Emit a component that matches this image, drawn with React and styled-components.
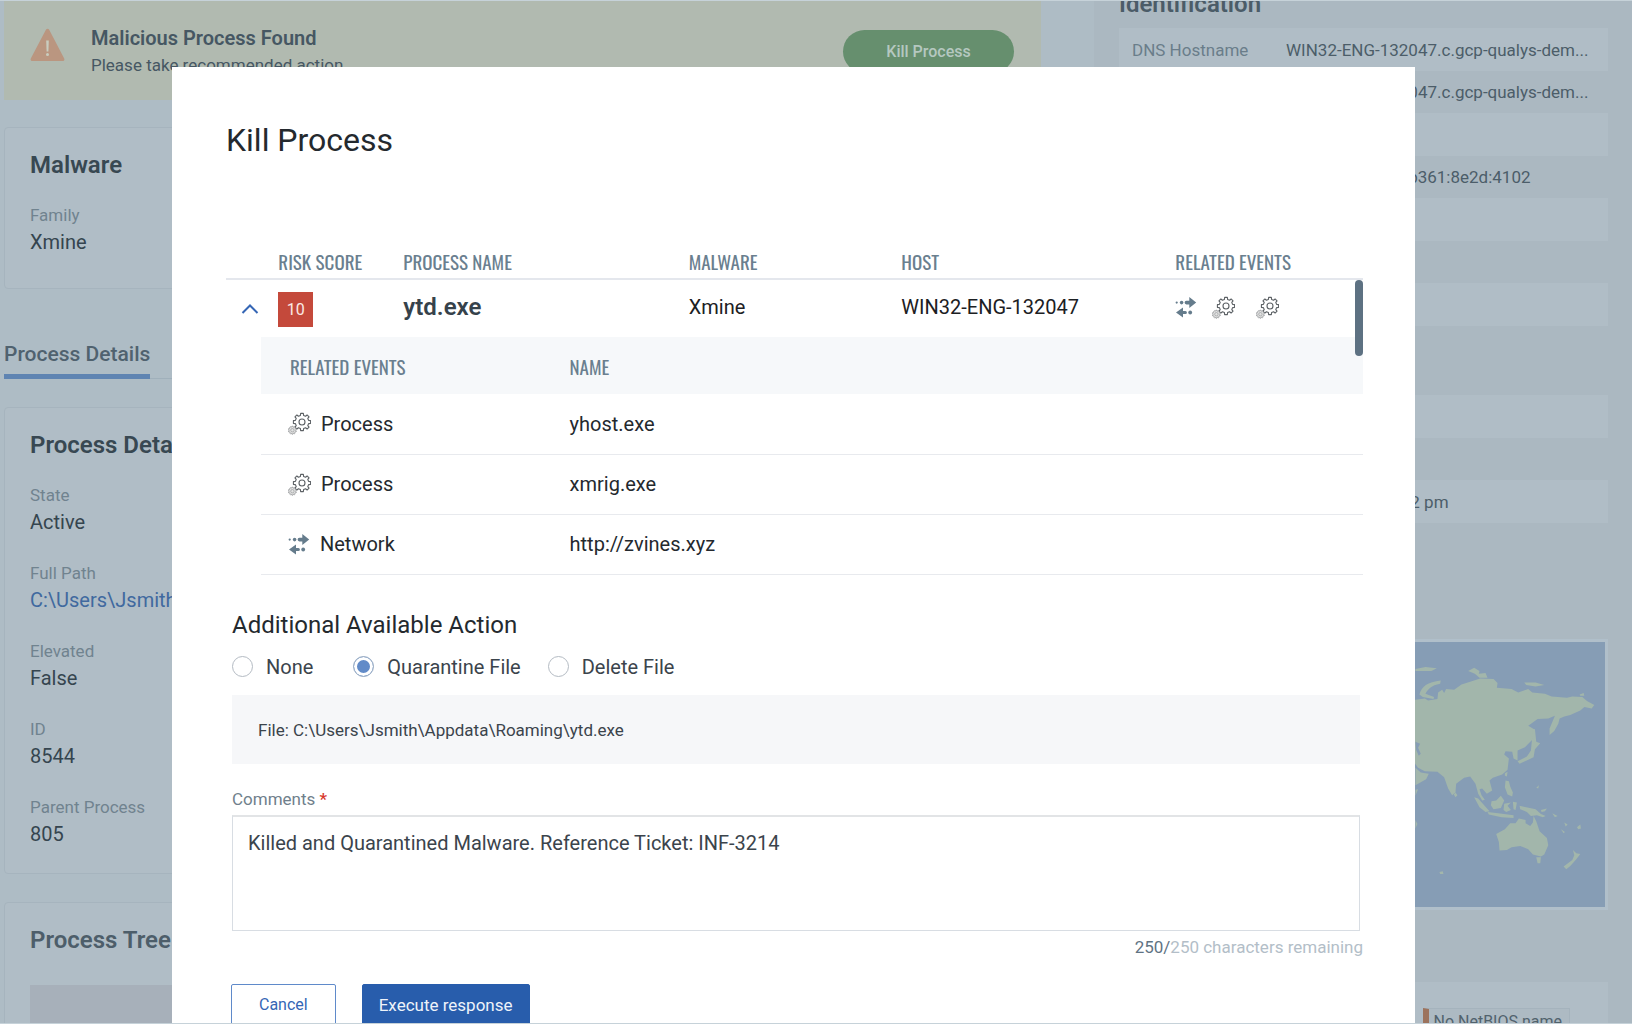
import React, { useState } from "react";
import styled, { createGlobalStyle, css } from "styled-components";

const GlobalStyle = createGlobalStyle`
  *, *::before, *::after { box-sizing: border-box; }
  body {
    margin: 0;
    font-family: Roboto, "Open Sans", sans-serif;
    color: #24292e;
    background: #c6d2d9;
  }
  h1, h2, h3, p, dl, dd, dt, fieldset, legend { margin: 0; padding: 0; }
  fieldset { border: 0; min-width: 0; }
  button, textarea { font-family: inherit; }
`;

const condensed = css`
  font-family: Oswald, "Roboto Condensed", "Liberation Sans Narrow", Roboto, sans-serif;
  font-weight: 400;
  font-size: 19px;
  line-height: 28px;
  text-transform: uppercase;
  color: #6a7f8f;
`;

/* ---------- page behind the dialog ---------- */

const Stage = styled.div`
  height: 100vh;
  overflow: hidden;
  border-top: 1px solid #c6d2d9;
  border-bottom: 1px solid #c6d2d9;
  display: grid;
  grid-template-columns: minmax(0, 1fr) 538px;
  background: #aebcc5;
`;

const Main = styled.main`
  padding: 0 53px 0 4px;
  min-width: 0;
`;

const Banner = styled.section`
  display: flex;
  align-items: flex-start;
  gap: 26px;
  height: 99px;
  padding: 24px 27px 0 26px;
  background: #b1bab0;
`;

const WarningIcon = styled.svg`
  width: 35px;
  height: 34px;
  margin-top: 3px;
  flex: none;
`;

const BannerText = styled.div`
  flex: 1;
  color: #465763;
`;

const BannerTitle = styled.h2`
  font-size: 20px;
  line-height: 26px;
  font-weight: 600;
`;

const BannerNote = styled.p`
  font-size: 17px;
  line-height: 28px;
`;

const PillButton = styled.button`
  width: 171px;
  height: 43px;
  margin-top: 5px;
  border: 0;
  border-radius: 22px;
  background: #668f6e;
  color: #b5c8c0;
  font-size: 16px;
  font-weight: 500;
`;

const Card = styled.section`
  margin-top: ${(p) => p.$top || 28}px;
  padding: 21px 25px ${(p) => p.$bottom || 25}px;
  border: 1px solid #a6b4be;
  border-radius: 4px;
  background: #b0bdc6;
`;

const CardTitle = styled.h2`
  font-size: 24px;
  line-height: 32px;
  font-weight: 600;
  color: ${(p) => (p.$muted ? "#4d5e6a" : "#384852")};
`;

const Fields = styled.dl`
  display: flex;
  flex-direction: column;
  gap: 24px;
  margin-top: 21px;
`;

const FieldLabel = styled.dt`
  font-size: 17px;
  line-height: 26px;
  color: #70838f;
`;

const FieldValue = styled.dd`
  font-size: 20px;
  line-height: 28px;
  color: #35454f;
  a { color: #40699f; text-decoration: none; }
`;

const Tabs = styled.nav`
  display: flex;
  margin: 50px 0 27px;
  box-shadow: inset 0 -1px 0 #a0b0bb;
`;

const Tab = styled.a`
  padding-bottom: 5px;
  border-bottom: 5px solid #5f84b2;
  font-size: 21px;
  line-height: 30px;
  font-weight: 500;
  color: #50626f;
  text-decoration: none;
`;

const TreeCanvas = styled.div`
  height: 200px;
  margin-top: 29px;
  background: #a7b0ba;
`;

const Aside = styled.aside`
  padding: 0 24px 0 25px;
  background: #abb8c1;
  min-width: 0;
`;

const AsideSection = styled.section`
  margin-top: ${(p) => (p.$first ? -11 : 31)}px;
`;

const AsideTitle = styled.h2`
  margin-bottom: 10px;
  font-size: 24px;
  line-height: 28px;
  font-weight: 600;
  color: #4b5c68;
`;

const PropertyRow = styled.div`
  display: grid;
  grid-template-columns: 154px minmax(0, 1fr);
  align-items: center;
  height: 42px;
  padding: 0 18px 0 13px;
  font-size: 17px;
  &:nth-child(odd) {
    height: 43px;
    background: #b0bdc6;
  }
`;

const PropertyLabel = styled.dt`
  color: #6a7d8a;
`;

const PropertyValue = styled.dd`
  white-space: nowrap;
  overflow: hidden;
  text-overflow: ellipsis;
  color: #4c5d69;
`;

const MapFrame = styled.div`
  margin-top: 57px;
  border: 3px solid #b0bfca;
  height: 271px;
  svg { display: block; width: 100%; height: 100%; background: #869db5; }
`;

const TagRow = styled.div`
  display: flex;
  justify-content: flex-end;
  margin-top: 13px;
  padding: 26px 38px;
  background: #b0bdc6;
`;

const Tag = styled.span`
  padding: 2px 7px 2px 5px;
  border: 1px solid #a5b3bd;
  border-left: 6px solid #9c735d;
  background: #adbac3;
  font-size: 16px;
  line-height: 22px;
  color: #51626d;
`;

/* ---------- dialog ---------- */

const Scrim = styled.div`
  position: fixed;
  inset: 67px 0 1px;
  padding: 0 217px 0 172px;
  display: flex;
  overflow: hidden;
`;

const Dialog = styled.div`
  flex: 1;
  min-width: 0;
  height: max-content;
  min-height: 100%;
  padding: 52px 52px 40px 54px;
  background: #fff;
`;

const DialogTitle = styled.h1`
  margin-bottom: 86px;
  font-size: 32px;
  line-height: 42px;
  font-weight: 400;
`;

const Scroller = styled.div`
  position: relative;
`;

const ScrollThumb = styled.span`
  position: absolute;
  top: 33px;
  right: 0;
  width: 8px;
  height: 76px;
  border-radius: 4px;
  background: #5d7182;
`;

const Table = styled.table`
  width: 100%;
  table-layout: fixed;
  border-collapse: collapse;
  th, td { padding: 0; text-align: left; }
`;

const HeadCell = styled.th`
  ${condensed}
  height: 32px;
  vertical-align: top;
  border-bottom: 2px solid #e4e7ed;
`;

const Cell = styled.td`
  height: 58px;
  vertical-align: middle;
  font-size: 20px;
  line-height: 24px;
  color: #1c2023;
  && { padding-bottom: 3px; }
`;

const ProcessName = styled.strong`
  font-size: 24px;
  font-weight: 600;
  color: #36424b;
`;

const ToggleButton = styled.button`
  display: flex;
  margin: 3px 0 0 13px;
  padding: 2px;
  border: 0;
  background: none;
`;

const Score = styled.span`
  display: flex;
  align-items: center;
  justify-content: center;
  width: 35px;
  height: 35px;
  margin-top: 5px;
  background: #c4493b;
  color: #fbe9e6;
  font-size: 16px;
`;

const IconRow = styled.div`
  display: flex;
  align-items: center;
  gap: 15px;
  svg:last-child { margin-left: 6px; }
`;

const Nested = styled.div`
  margin-left: 35px;
`;

const NestedHead = styled.th`
  ${condensed}
  height: 57px;
  background: #f6f8fa;
  &:first-child { padding-left: 29px; }
`;

const NestedCell = styled.td`
  height: 60px;
  border-bottom: 1px solid #e8eaee;
  font-size: 20px;
  line-height: 24px;
  color: #24292e;
  &:first-child { padding-left: 27px; }
`;

const EventKind = styled.span`
  display: flex;
  align-items: center;
  gap: 10px;
`;

const Form = styled.form`
  padding: 35px 3px 0 6px;
`;

const Legend = styled.legend`
  font-size: 24px;
  line-height: 30px;
`;

const RadioRow = styled.div`
  display: flex;
  gap: ${(p) => p.$gap}px;
  padding: 16px 0 17px;
`;

const RadioLabel = styled.label`
  display: flex;
  align-items: center;
  gap: 13px;
  margin-right: ${(p) => p.$after || 0}px;
  font-size: 20px;
  line-height: 22px;
  color: #3b444c;
`;

const Radio = styled.input`
  appearance: none;
  width: 21px;
  height: 21px;
  margin: 0;
  border: 1px solid #b4bbc3;
  border-radius: 50%;
  background: #fff;
  &:checked {
    background: #628bc8;
    box-shadow: inset 0 0 0 3px #fff;
    border-color: #9fb0c4;
  }
`;

const FileBox = styled.p`
  padding: 21px 26px 20px;
  background: #f6f7f9;
  font-size: 17px;
  line-height: 28px;
  color: #3b444c;
`;

const CommentLabel = styled.label`
  display: block;
  margin: 23px 0 4px;
  font-size: 17px;
  line-height: 24px;
  color: #707f8c;
  span { color: #d8372b; font-weight: 500; }
`;

const Comment = styled.textarea`
  display: block;
  width: 100%;
  height: 116px;
  padding: 13px 15px;
  border: 1px solid #d8dde3;
  border-top: 2px solid #e2e4e6;
  resize: none;
  outline: 0;
  font-size: 20px;
  line-height: 26px;
  color: #3b444c;
`;

const Counter = styled.p`
  margin: 4px -3px 0 0;
  text-align: right;
  font-size: 17px;
  line-height: 24px;
  color: #b3bec8;
  span { color: #5f7383; }
`;

const Actions = styled.div`
  display: flex;
  gap: 26px;
  margin: 25px 0 0 -1px;
`;

const ActionButton = styled.button`
  height: 42px;
  padding: 1px ${(p) => (p.$primary ? 16 : 27)}px 0;
  border: 1px solid ${(p) => (p.$primary ? "#285dac" : "#5f8aca")};
  border-radius: 2px;
  background: ${(p) => (p.$primary ? "#285dac" : "#fff")};
  color: ${(p) => (p.$primary ? "#eef3fa" : "#3566b5")};
  font-size: ${(p) => (p.$primary ? 17 : 16)}px;
  line-height: 24px;
`;

/* ---------- drawings ---------- */

function gearPath(cx, cy, outer, inner, teeth) {
  const step = (Math.PI * 2) / teeth;
  const parts = [];
  for (let i = 0; i < teeth; i += 1) {
    const a = i * step - Math.PI / 2;
    [
      [inner, -0.3],
      [outer, -0.2],
      [outer, 0.2],
      [inner, 0.3],
    ].forEach(([r, k]) => {
      const x = cx + r * Math.cos(a + k * step);
      const y = cy + r * Math.sin(a + k * step);
      parts.push(`${parts.length ? "L" : "M"}${x.toFixed(2)} ${y.toFixed(2)}`);
    });
  }
  return `${parts.join("")}Z`;
}

const bigGear = gearPath(14, 10, 8.7, 6.8, 8);
const smallGear = gearPath(4.4, 18.2, 4, 3.4, 10);

const GearsIcon = () => (
  <svg width="23" height="23" viewBox="0 0 23 23" fill="none" strokeLinejoin="round" aria-hidden="true">
    <path d={bigGear} stroke="#5c6165" strokeWidth="1.1" />
    <circle cx="14" cy="10" r="3" stroke="#5c6165" strokeWidth="1.1" />
    <path d={smallGear} fill="#e2e2e2" stroke="#9b9d9f" strokeWidth="0.9" />
    <circle cx="4.4" cy="18.2" r="1.7" stroke="#9b9d9f" strokeWidth="0.7" />
  </svg>
);

const NetworkIcon = () => (
  <svg width="22" height="22" viewBox="0 0 22 22" fill="#657c8c" aria-hidden="true">
    <circle cx="1.7" cy="6.6" r="1.1" />
    <circle cx="6.6" cy="6.6" r="1.8" />
    <path d="M11.400 4.800h2.900V1l6.900 5.500-6.900 5.500V8.400h-2.900a1.800 1.800 0 0 1 0-3.600z" />
    <path d="M10.400 15H8v-3.400L1 16.600l7 5V18h2.400a1.500 1.500 0 0 0 0-3z" />
    <circle cx="15.200" cy="16.500" r="1.900" />
  </svg>
);

const ChevronUp = () => (
  <svg width="18" height="12" viewBox="0 0 18 12" fill="none" aria-hidden="true">
    <path d="M1.500 10 9 2.500 16.500 10" stroke="#3566b5" strokeWidth="2" />
  </svg>
);

const WorldMap = () => (
  <svg viewBox="-869 17 1449 794" preserveAspectRatio="xMaxYMid slice" fill="#a2b6ab" role="img" aria-label="Asset location">
    <path d="M-20 190 12 190 40 186 50 192 78 188 80 168 92 160 98 170 104 158 128 160 150 144 176 136 206 126 246 128 258 140 256 154 300 158 320 168 350 158 362 168 400 172 420 180 466 184 482 180 512 182 526 194 548 206 540 216 518 212 506 222 476 236 458 240 444 246 440 262 428 284 414 296 414 276 430 238 410 246 378 248 350 268 370 280 368 304 340 332 318 342 318 372 306 366 302 346 282 344 278 354 292 366 288 400 272 414 244 424 234 432 242 462 226 472 212 456 204 458 210 476 220 490 212 492 200 472 192 442 176 420 158 424 134 442 132 468 122 476 110 456 98 422 78 406 40 404 20 394 -20 340Z" />
    <path d="M12 394 28 408 52 412 44 428 12 446ZM12 460 20 458 12 478ZM12 550 18 562 12 576Z" />
    <path d="M24 174C30 150 48 136 88 132L86 142C60 146 48 160 42 172L68 182 66 188 34 182ZM12 98 42 92 76 96 60 104 12 104ZM170 104 188 94 204 104 202 112 222 110 228 124 204 124 190 112ZM338 138 372 138 398 146 372 150 344 146ZM504 174 516 170 518 178 506 178Z" />
    <path d="M364 282 370 278 374 316 386 320 370 338 366 362 350 370 324 382 318 374 346 360 358 342ZM280 410 288 406 286 420 280 418ZM282 432 292 434 296 450 304 468 302 480 288 474 280 452ZM132 468 138 476 132 482 127 474Z" />
    <path d="M188 482 200 486 216 504 234 524 222 526 204 512ZM228 526 260 530 306 536 306 544 270 542 232 534ZM240 494 254 492 268 478 278 492 268 514 246 518 238 506ZM278 502 298 498 288 508 298 520 284 526 276 520ZM304 496 316 498 312 520 306 518ZM324 508 344 512 372 518 388 532 402 538 394 542 376 536 358 538 346 526 326 518ZM388 520 406 516 400 524 390 526ZM422 530 438 538 430 542Z" />
    <path d="M254 592 280 578 296 560 312 560 322 546 342 550 342 560 356 568 364 558 366 538 374 554 384 584 406 604 410 626 398 654 388 660 364 654 350 638 326 628 300 632 286 640 264 642 262 616ZM374 662 388 662 386 680 378 680Z" />
    <path d="M484 640 494 650 506 652 494 668 476 688 464 698 456 690 482 670 488 656ZM496 572 506 564 508 576 500 578ZM458 558 468 564 462 570ZM448 578 460 586 456 590ZM84 706 94 704 96 712 86 712ZM374 454 382 446 380 456Z" />
    <path d="M12 316 26 322 20 334 28 352 22 358 14 340Z" fill="#869db5" />
  </svg>
);

/* ---------- data ---------- */

const details = [
  ["State", "Active"],
  ["Full Path", "C:\\Users\\Jsmith\\Appdata\\Roaming\\ytd.exe", true],
  ["Elevated", "False"],
  ["ID", "8544"],
  ["Parent Process", "805"],
];

const identification = [
  ["DNS Hostname", "WIN32-ENG-132047.c.gcp-qualys-dem..."],
  ["FQDN", "WIN32-ENG-132047.c.gcp-qualys-dem..."],
  ["NetBIOS Name", ""],
  ["IPv6 Address", "fe80::8c5f:d38a:b361:8e2d:4102"],
  ["Asset ID", ""],
  ["Host ID", ""],
  ["Agent ID", ""],
];

const activity = [
  ["Last User", ""],
  ["Last Boot", ""],
  ["Last Seen", "Feb 2, 2022 12:12 pm"],
];

const events = [
  ["Process", "yhost.exe"],
  ["Process", "xmrig.exe"],
  ["Network", "http://zvines.xyz"],
];

const actions = [
  ["None", 14],
  ["Quarantine File", 1],
  ["Delete File", 0],
];

const FieldList = ({ items }) => (
  <Fields>
    {items.map(([label, value, link]) => (
      <div key={label}>
        <FieldLabel>{label}</FieldLabel>
        <FieldValue>{link ? <a href="#path">{value}</a> : value}</FieldValue>
      </div>
    ))}
  </Fields>
);

const PropertyList = ({ items }) => (
  <dl>
    {items.map(([label, value]) => (
      <PropertyRow key={label}>
        <PropertyLabel>{label}</PropertyLabel>
        <PropertyValue>{value}</PropertyValue>
      </PropertyRow>
    ))}
  </dl>
);

const KillProcessDialog = () => {
  const [action, setAction] = useState("Quarantine File");
  return (
    <Scrim>
      <Dialog role="dialog" aria-labelledby="dialog-title">
        <DialogTitle id="dialog-title">Kill Process</DialogTitle>
        <Scroller>
          <Table>
            <colgroup>
              <col style={{ width: "4.6%" }} />
              <col style={{ width: "11%" }} />
              <col style={{ width: "25.1%" }} />
              <col style={{ width: "18.7%" }} />
              <col style={{ width: "24.1%" }} />
              <col />
            </colgroup>
            <thead>
              <tr>
                <HeadCell aria-label="Expand" />
                <HeadCell>Risk Score</HeadCell>
                <HeadCell>Process Name</HeadCell>
                <HeadCell>Malware</HeadCell>
                <HeadCell>Host</HeadCell>
                <HeadCell>Related Events</HeadCell>
              </tr>
            </thead>
            <tbody>
              <tr>
                <Cell>
                  <ToggleButton type="button" aria-label="Collapse row">
                    <ChevronUp />
                  </ToggleButton>
                </Cell>
                <Cell><Score>10</Score></Cell>
                <Cell><ProcessName>ytd.exe</ProcessName></Cell>
                <Cell>Xmine</Cell>
                <Cell>WIN32-ENG-132047</Cell>
                <Cell>
                  <IconRow>
                    <NetworkIcon />
                    <GearsIcon />
                    <GearsIcon />
                  </IconRow>
                </Cell>
              </tr>
              <tr>
                <td colSpan={6}>
                  <Nested>
                    <Table>
                      <colgroup>
                        <col style={{ width: "28%" }} />
                        <col />
                      </colgroup>
                      <thead>
                        <tr>
                          <NestedHead>Related Events</NestedHead>
                          <NestedHead>Name</NestedHead>
                        </tr>
                      </thead>
                      <tbody>
                        {events.map(([kind, name]) => (
                          <tr key={name}>
                            <NestedCell>
                              <EventKind>
                                {kind === "Network" ? <NetworkIcon /> : <GearsIcon />}
                                {kind}
                              </EventKind>
                            </NestedCell>
                            <NestedCell>{name}</NestedCell>
                          </tr>
                        ))}
                      </tbody>
                    </Table>
                  </Nested>
                </td>
              </tr>
            </tbody>
          </Table>
          <ScrollThumb />
        </Scroller>

        <Form onSubmit={(e) => e.preventDefault()}>
          <fieldset>
            <Legend>Additional Available Action</Legend>
            <RadioRow $gap={26}>
              {actions.map(([label, after]) => (
                <RadioLabel key={label} $after={after}>
                  <Radio
                    type="radio"
                    name="action"
                    checked={action === label}
                    onChange={() => setAction(label)}
                  />
                  {label}
                </RadioLabel>
              ))}
            </RadioRow>
          </fieldset>
          <FileBox>File: C:\Users\Jsmith\Appdata\Roaming\ytd.exe</FileBox>
          <CommentLabel htmlFor="comments">
            Comments <span>*</span>
          </CommentLabel>
          <Comment
            id="comments"
            defaultValue="Killed and Quarantined Malware. Reference Ticket: INF-3214"
          />
          <Counter><span>250/</span>250 characters remaining</Counter>
          <Actions>
            <ActionButton type="button">Cancel</ActionButton>
            <ActionButton type="submit" $primary>Execute response</ActionButton>
          </Actions>
        </Form>
      </Dialog>
    </Scrim>
  );
};

export default function App() {
  return (
    <>
      <GlobalStyle />
      <Stage>
        <Main>
          <Banner>
            <WarningIcon viewBox="0 0 35 34" aria-hidden="true">
              <path d="M15.900 1.700a1.900 1.900 0 0 1 3.300 0l15 28.700a1.800 1.800 0 0 1-1.600 2.700H2.400a1.800 1.800 0 0 1-1.600-2.700z" fill="#ba9680" />
              <path d="M16.200 12.500h2.600l-.4 11h-1.800z" fill="#c9cdbf" />
              <circle cx="17.500" cy="26.500" r="1.500" fill="#c9cdbf" />
            </WarningIcon>
            <BannerText>
              <BannerTitle>Malicious Process Found</BannerTitle>
              <BannerNote>Please take recommended action</BannerNote>
            </BannerText>
            <PillButton type="button">Kill Process</PillButton>
          </Banner>
          <Card $top={27} $bottom={32}>
            <CardTitle>Malware</CardTitle>
            <FieldList items={[["Family", "Xmine"]]} />
          </Card>
          <Tabs>
            <Tab href="#details">Process Details</Tab>
          </Tabs>
          <Card>
            <CardTitle>Process Details</CardTitle>
            <FieldList items={details} />
          </Card>
          <Card>
            <CardTitle $muted>Process Tree</CardTitle>
            <TreeCanvas />
          </Card>
        </Main>
        <Aside>
          <AsideSection $first>
            <AsideTitle>Identification</AsideTitle>
            <PropertyList items={identification} />
          </AsideSection>
          <AsideSection>
            <AsideTitle>Activity</AsideTitle>
            <PropertyList items={activity} />
          </AsideSection>
          <AsideSection>
            <AsideTitle>Location</AsideTitle>
            <MapFrame><WorldMap /></MapFrame>
          </AsideSection>
          <AsideSection>
            <AsideTitle>Tags</AsideTitle>
            <TagRow><Tag>No NetBIOS name</Tag></TagRow>
          </AsideSection>
        </Aside>
      </Stage>
      <KillProcessDialog />
    </>
  );
}
